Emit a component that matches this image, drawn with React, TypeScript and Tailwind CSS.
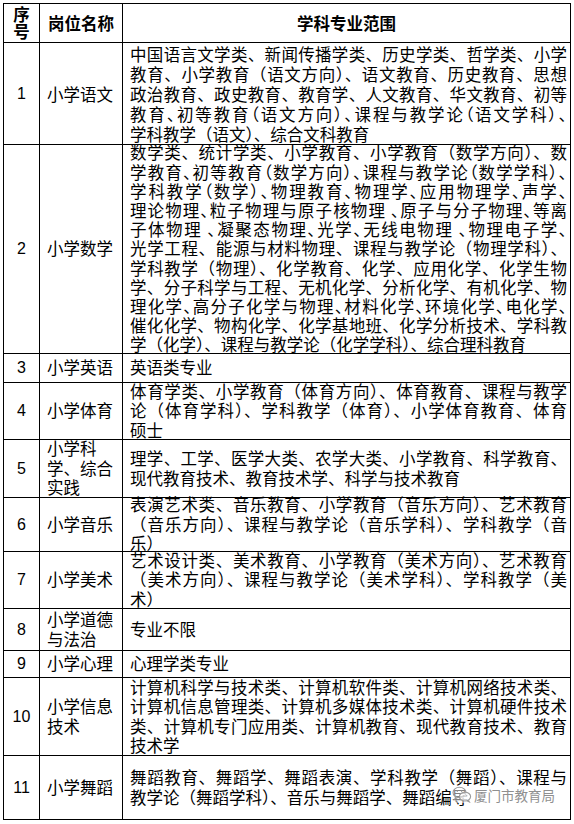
import React from "react";

type Row = {
  no: string;
  name: string[];
  scope: string[];
  lh?: string;
};

const rows: Row[] = [
  {
    no: "1",
    name: ["小学语文"],
    lh: "leading-[20px]",
    scope: [
      "中国语言文学类、新闻传播学类、历史学类、哲学类、小学",
      "教育、小学教育（语文方向）、语文教育、历史教育、思想",
      "政治教育、政史教育、教育学、人文教育、华文教育、初等",
      "教育、初等教育（语文方向）、课程与教学论（语文学科）、",
      "学科教学（语文）、综合文科教育",
    ],
  },
  {
    no: "2",
    name: ["小学数学"],
    lh: "leading-[19.2px]",
    scope: [
      "数学类、统计学类、小学教育、小学教育（数学方向）、数",
      "学教育、初等教育（数学方向）、课程与教学论（数学学科）、",
      "学科教学（数学）、物理教育、物理学、应用物理学、声学、",
      "理论物理、粒子物理与原子核物理 、原子与分子物理、等离",
      "子体物理 、凝聚态物理、光学、无线电物理 、物理电子学、",
      "光学工程、能源与材料物理、课程与教学论（物理学科）、",
      "学科教学（物理）、化学教育、化学、应用化学、化学生物",
      "学、分子科学与工程、无机化学、分析化学、有机化学、物",
      "理化学、高分子化学与物理、材料化学、环境化学、电化学、",
      "催化化学、物构化学、化学基地班、化学分析技术、学科教",
      "学（化学）、课程与教学论（化学学科）、综合理科教育",
    ],
  },
  { no: "3", name: ["小学英语"], scope: ["英语类专业"] },
  {
    no: "4",
    name: ["小学体育"],
    scope: [
      "体育学类、小学教育（体育方向）、体育教育、课程与教学",
      "论（体育学科）、学科教学（体育）、小学体育教育、体育",
      "硕士",
    ],
  },
  {
    no: "5",
    name: ["小学科", "学、综合", "实践"],
    scope: [
      "理学、工学、医学大类、农学大类、小学教育、科学教育、",
      "现代教育技术、教育技术学、科学与技术教育",
    ],
  },
  {
    no: "6",
    name: ["小学音乐"],
    scope: [
      "表演艺术类、音乐教育、小学教育（音乐方向）、艺术教育",
      "（音乐方向）、课程与教学论（音乐学科）、学科教学（音",
      "乐）",
    ],
  },
  {
    no: "7",
    name: ["小学美术"],
    scope: [
      "艺术设计类、美术教育、小学教育（美术方向）、艺术教育",
      "（美术方向）、课程与教学论（美术学科）、学科教学（美",
      "术）",
    ],
  },
  { no: "8", name: ["小学道德", "与法治"], scope: ["专业不限"] },
  { no: "9", name: ["小学心理"], scope: ["心理学类专业"] },
  {
    no: "10",
    name: ["小学信息", "技术"],
    scope: [
      "计算机科学与技术类、计算机软件类、计算机网络技术类、",
      "计算机信息管理类、计算机多媒体技术类、计算机硬件技术",
      "类、计算机专门应用类、计算机教育、现代教育技术、教育",
      "技术学",
    ],
  },
  {
    no: "11",
    name: ["小学舞蹈"],
    scope: [
      "舞蹈教育、舞蹈学、舞蹈表演、学科教学（舞蹈）、课程与",
      "教学论（舞蹈学科）、音乐与舞蹈学、舞蹈编导",
    ],
  },
];

function Cell({ children, className = "" }: { children: React.ReactNode; className?: string }) {
  return <div className={`bg-white flex flex-col justify-center min-w-0 ${className}`}>{children}</div>;
}

function WeChatMark() {
  return (
    <svg width="20" height="17" viewBox="0 0 20 17" fill="none" stroke="#9a9a9a" strokeWidth="1.1">
      <ellipse cx="7.5" cy="6.5" rx="6.5" ry="5.2" />
      <path d="M3.6 10.6 L2.8 13 L5.6 11.4" />
      <ellipse cx="13" cy="10.6" rx="5.6" ry="4.4" fill="white" fillOpacity="0.6" />
      <path d="M16.4 14.2 L17.4 16 L15 14.8" />
      <circle cx="5.3" cy="5.2" r="0.7" fill="#9a9a9a" stroke="none" />
      <circle cx="9.6" cy="5.2" r="0.7" fill="#9a9a9a" stroke="none" />
      <circle cx="11.2" cy="9.8" r="0.6" fill="#9a9a9a" stroke="none" />
      <circle cx="14.8" cy="9.8" r="0.6" fill="#9a9a9a" stroke="none" />
    </svg>
  );
}

// lines longer than 26 chars don't fit at 16.5px, so squeeze their punctuation
const tooLong = (line: string) => line.length > 26;

export default function App() {
  return (
    <div className="relative w-[574px] h-[824px] bg-white overflow-hidden font-['Noto_Sans_CJK_SC','Noto_Sans_CJK_JP',sans-serif] text-black">
      <div className="pt-[3px] pl-[3px]">
        <div className="grid w-fit grid-cols-[35px_82px_447px] grid-rows-[38px_101px_208px_28px_56px_57px_53px_56px_41px_26px_77px_63px] gap-px bg-black p-px">
          {/* header */}
          <Cell className="bg-[#ffd966] items-center text-[16.5px] font-bold leading-[17px]">
            <span>序</span>
            <span>号</span>
          </Cell>
          <Cell className="bg-[#ffd966] items-center text-[16.5px] font-bold">岗位名称</Cell>
          <Cell className="bg-[#ffd966] items-center text-[16.5px] font-bold">学科专业范围</Cell>

          {rows.map((r) => (
            <React.Fragment key={r.no}>
              <Cell className="items-center text-[16px] font-['Liberation_Sans',sans-serif]">{r.no}</Cell>
              <Cell className={`pl-[7px] text-[16.5px] ${r.lh ?? "leading-[19.4px]"}`}>
                {r.name.map((n) => (
                  <div key={n} className="whitespace-nowrap">
                    {n}
                  </div>
                ))}
              </Cell>
              <Cell className={`pl-[7px] pr-[3px] text-[16.5px] ${r.lh ?? "leading-[19.4px]"}`}>
                {r.scope.map((line, i) => (
                  <div
                    key={i}
                    className={`text-justify ${tooLong(line) ? "[font-feature-settings:'palt']" : ""} ${
                      i < r.scope.length - 1 ? "[text-align-last:justify]" : ""
                    }`}
                  >
                    {line}
                  </div>
                ))}
              </Cell>
            </React.Fragment>
          ))}
        </div>
      </div>

      {/* watermark */}
      <div className="absolute left-[452px] top-[786px] flex items-center gap-[2px] bg-white/50 pr-[2px]">
        <WeChatMark />
        <span className="text-[13.5px] leading-[16px] text-[#8f8f8f] font-['Noto_Sans_CJK_SC',sans-serif] [text-shadow:0_0_1px_#fff]">
          厦门市教育局
        </span>
      </div>
    </div>
  );
}
